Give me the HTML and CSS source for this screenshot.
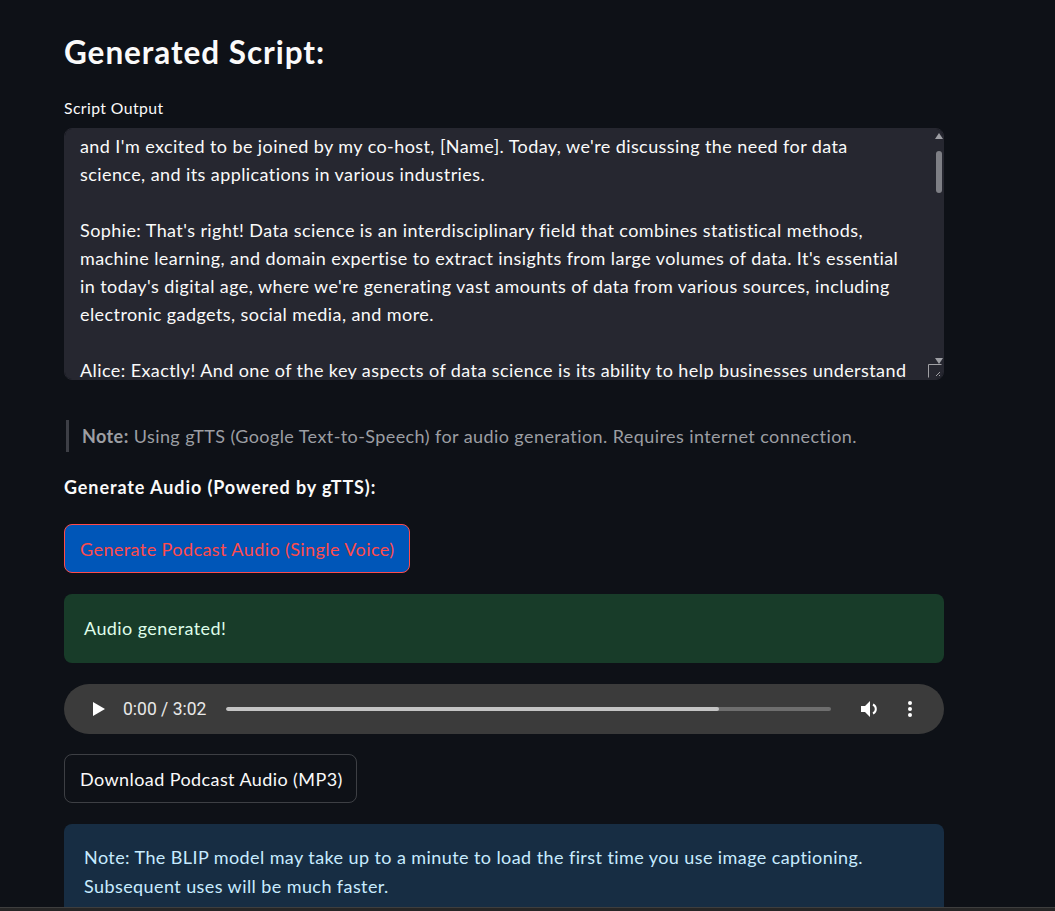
FILE: index.html
```html
<!DOCTYPE html>
<html lang="en">
<head>
<meta charset="utf-8">
<title>Generated Script</title>
<link rel="stylesheet" href="styles.css">
</head>
<body>
<main class="main">
  <h3 class="title">Generated Script:</h3>
  <label class="field-label" for="script-output">Script Output</label>
  <div class="script-wrap">
  <textarea id="script-output" class="script-box" wrap="off" readonly>Alex: Welcome to "Data Unplugged," the podcast where we explore the world of data! I'm your host, Jay,
and I'm excited to be joined by my co-host, [Name]. Today, we're discussing the need for data
science, and its applications in various industries.

Sophie: That's right! Data science is an interdisciplinary field that combines statistical methods,
machine learning, and domain expertise to extract insights from large volumes of data. It's essential
in today's digital age, where we're generating vast amounts of data from various sources, including
electronic gadgets, social media, and more.

Alice: Exactly! And one of the key aspects of data science is its ability to help businesses understand
their customers better. By analyzing customer behavior, companies can personalize their products
and services, which leads to higher satisfaction and loyalty.

Sophie: And it's not just businesses. Healthcare is another industry where data science is making
a huge impact. From predicting disease outbreaks to improving patient diagnoses, data-driven
approaches are saving lives every day.

Alex: That's fascinating. What about finance? I've heard that banks rely heavily on data science
for fraud detection and risk management.

Sophie: Absolutely. Machine learning models can flag suspicious transactions in real time, and
credit scoring has become much more accurate thanks to the huge amount of historical data.

Alice: Another exciting area is transportation. Ride-sharing apps and logistics companies use
data science to optimize routes, predict demand, and reduce delivery times.

Alex: It really seems like data science is everywhere. But what skills does someone need to get
started in this field?

Sophie: A solid foundation in statistics and programming is essential, especially Python or R.
Curiosity and strong communication skills are just as important, because insights are only useful
if you can explain them clearly.

Alice: And don't forget about data ethics. As we collect more data, protecting privacy and avoiding
bias in our models becomes a real responsibility for every data scientist.

Alex: Great points, both of you. That's all the time we have for today. Thanks for tuning in,
and see you in the next episode!</textarea>
    <div class="vscroll" aria-hidden="true">
      <svg class="arrow" width="8" height="6" viewBox="0 0 8 6"><path d="M4 0 L8 6 H0 Z" fill="#9d9ea3"/></svg>
      <div class="vtrack"><div class="vthumb"></div></div>
      <svg class="arrow" width="8" height="6" viewBox="0 0 8 6"><path d="M0 0 H8 L4 6 Z" fill="#9d9ea3"/></svg>
    </div>
  </div>

  <blockquote class="note"><strong>Note:</strong> Using gTTS (Google Text-to-Speech) for audio generation. Requires internet connection.</blockquote>

  <p class="section-label">Generate Audio (Powered by gTTS):</p>

  <div class="row"><button class="btn btn-primary" type="button">Generate Podcast Audio (Single Voice)</button></div>

  <div class="alert alert-success">Audio generated!</div>

  <div class="player">
    <svg class="play" width="14" height="16" viewBox="0 0 14 16"><path d="M1 1 L13 8 L1 15 Z" fill="#ffffff"/></svg>
    <span class="time">0:00 / 3:02</span>
    <div class="track"><div class="buffered" style="width: 81.5%"></div></div>
    <svg class="vol" width="22" height="20" viewBox="0 0 22 20"><path d="M1 7 H5 L10 2 V18 L5 13 H1 Z" fill="#ffffff"/><path d="M13 5.5 A5 5 0 0 1 13 14.5" fill="none" stroke="#ffffff" stroke-width="2"/></svg>
    <svg class="more" width="6" height="18" viewBox="0 0 6 18"><circle cx="3" cy="3" r="2" fill="#ffffff"/><circle cx="3" cy="9" r="2" fill="#ffffff"/><circle cx="3" cy="15" r="2" fill="#ffffff"/></svg>
  </div>

  <div class="row"><button class="btn btn-secondary" type="button">Download Podcast Audio (MP3)</button></div>

  <div class="alert alert-info">Note: The BLIP model may take up to a minute to load the first time you use image captioning.<br>Subsequent uses will be much faster.</div>
</main>
<div class="hscroll"></div>
<script src="script.js"></script>
</body>
</html>
```

FILE: styles.css
```css
html, body {
  height: 100%;
  overflow: hidden;
}

body {
  margin: 0;
  background: #0e1117;
  color: #fafafa;
  font-family: Lato, "Source Sans Pro", "Noto Sans", sans-serif;
  letter-spacing: 0.026em;
}

.main {
  width: 880px;
  margin-left: 64px;
  padding-top: 33px;
  display: flex;
  flex-direction: column;
  align-items: stretch;
}

.title {
  margin: 0;
  font-size: 31.5px;
  line-height: 38px;
  font-weight: 700;
  letter-spacing: 0.03em;
  color: #fafafa;
}

.field-label {
  margin-top: 26px;
  font-size: 15.75px;
  line-height: 21px;
  color: #fafafa;
}

.script-wrap {
  position: relative;
  margin-top: 10px;
  width: 880px;
  height: 252px;
}

.script-box {
  display: block;
  box-sizing: border-box;
  width: 880px;
  height: 252px;
  padding: 16px 15px;
  border: 1px solid #262730;
  border-radius: 8px;
  background: #262730;
  color: #fafafa;
  font-family: inherit;
  letter-spacing: inherit;
  font-size: 18px;
  line-height: 28px;
  overflow-x: hidden;
  overflow-y: scroll;
  resize: vertical;
  outline: none;
}

.script-box::-webkit-resizer {
  background: url("data:image/svg+xml;utf8,<svg xmlns='http://www.w3.org/2000/svg' width='14' height='14'><path d='M0.5 13.5 V0.5 H13.5' fill='none' stroke='%23a0a0a4'/><path d='M8 12 L12 8 M11 12 L12 11' stroke='%23a0a0a4'/></svg>") no-repeat;
}

.vscroll {
  position: absolute;
  top: 0;
  right: 0;
  width: 14px;
  height: 236px;
  display: flex;
  flex-direction: column;
  align-items: center;
  padding-top: 5px;
  box-sizing: border-box;
}

.arrow {
  flex: none;
  margin-left: 3px;
}

.vtrack {
  flex: 1;
  width: 6px;
  margin: 6px 0 6px 3px;
  padding-top: 6px;
}

.vthumb {
  width: 6px;
  height: 42px;
  border-radius: 3px;
  background: #7e7f85;
}

.note {
  margin: 40px 0 0 2px;
  padding: 0 0 0 13px;
  border-left: 3px solid #3d3f46;
  font-size: 18px;
  line-height: 32px;
  color: #9c9ea3;
}
.note strong {
  font-weight: 700;
}

.section-label {
  margin: 22px 0 0;
  font-size: 18px;
  line-height: 27px;
  font-weight: 700;
  letter-spacing: 0.05em;
  color: #fafafa;
}

.row {
  display: flex;
}

.btn {
  box-sizing: border-box;
  height: 49px;
  padding: 0 15px;
  border-radius: 8px;
  font-family: inherit;
  letter-spacing: inherit;
  font-size: 18px;
  cursor: pointer;
}

.btn-primary {
  background: #0056b8;
  border: 1px solid #ff4b4b;
  color: #ff4b4b;
}

.btn-secondary {
  background: transparent;
  border: 1px solid rgba(250, 250, 250, 0.2);
  color: #fafafa;
  padding-right: 13px;
}

.section-label + .row {
  margin-top: 23px;
}

.alert {
  box-sizing: border-box;
  width: 880px;
  padding: 21px 20px;
  border-radius: 8px;
  font-size: 18px;
  line-height: 27px;
}

.alert-success {
  margin-top: 21px;
  background: #183c29;
  color: #dffde9;
}

.alert-info {
  margin-top: 21px;
  padding-top: 19px;
  line-height: 28.5px;
  background: #172d43;
  color: #c7ebff;
}

.player {
  margin-top: 21px;
  height: 50px;
  border-radius: 25px;
  background: #3b3b3b;
  display: flex;
  align-items: center;
  padding-left: 28px;
  padding-right: 31px;
}

.play {
  flex: none;
}

.time {
  margin-left: 17px;
  font-family: Roboto, "Liberation Sans", Arial, sans-serif;
  letter-spacing: 0;
  font-size: 17.5px;
  color: #e8e8e8;
}

.track {
  flex: 1;
  margin-left: 20px;
  height: 4px;
  border-radius: 2px;
  background: #6e6e6e;
  overflow: hidden;
}

.buffered {
  height: 100%;
  background: #c4c4c4;
  border-radius: 2px;
}

.vol {
  margin-left: 29px;
  flex: none;
}

.more {
  margin-left: 25px;
  flex: none;
}

.player + .row {
  margin-top: 20px;
}

.hscroll {
  position: fixed;
  left: 0;
  right: 0;
  bottom: 0;
  height: 3px;
  background: #262626;
  border-top: 1px solid #3e3e3e;
}
```

FILE: script.js
```js
document.getElementById('script-output').scrollTop = 41;
```
